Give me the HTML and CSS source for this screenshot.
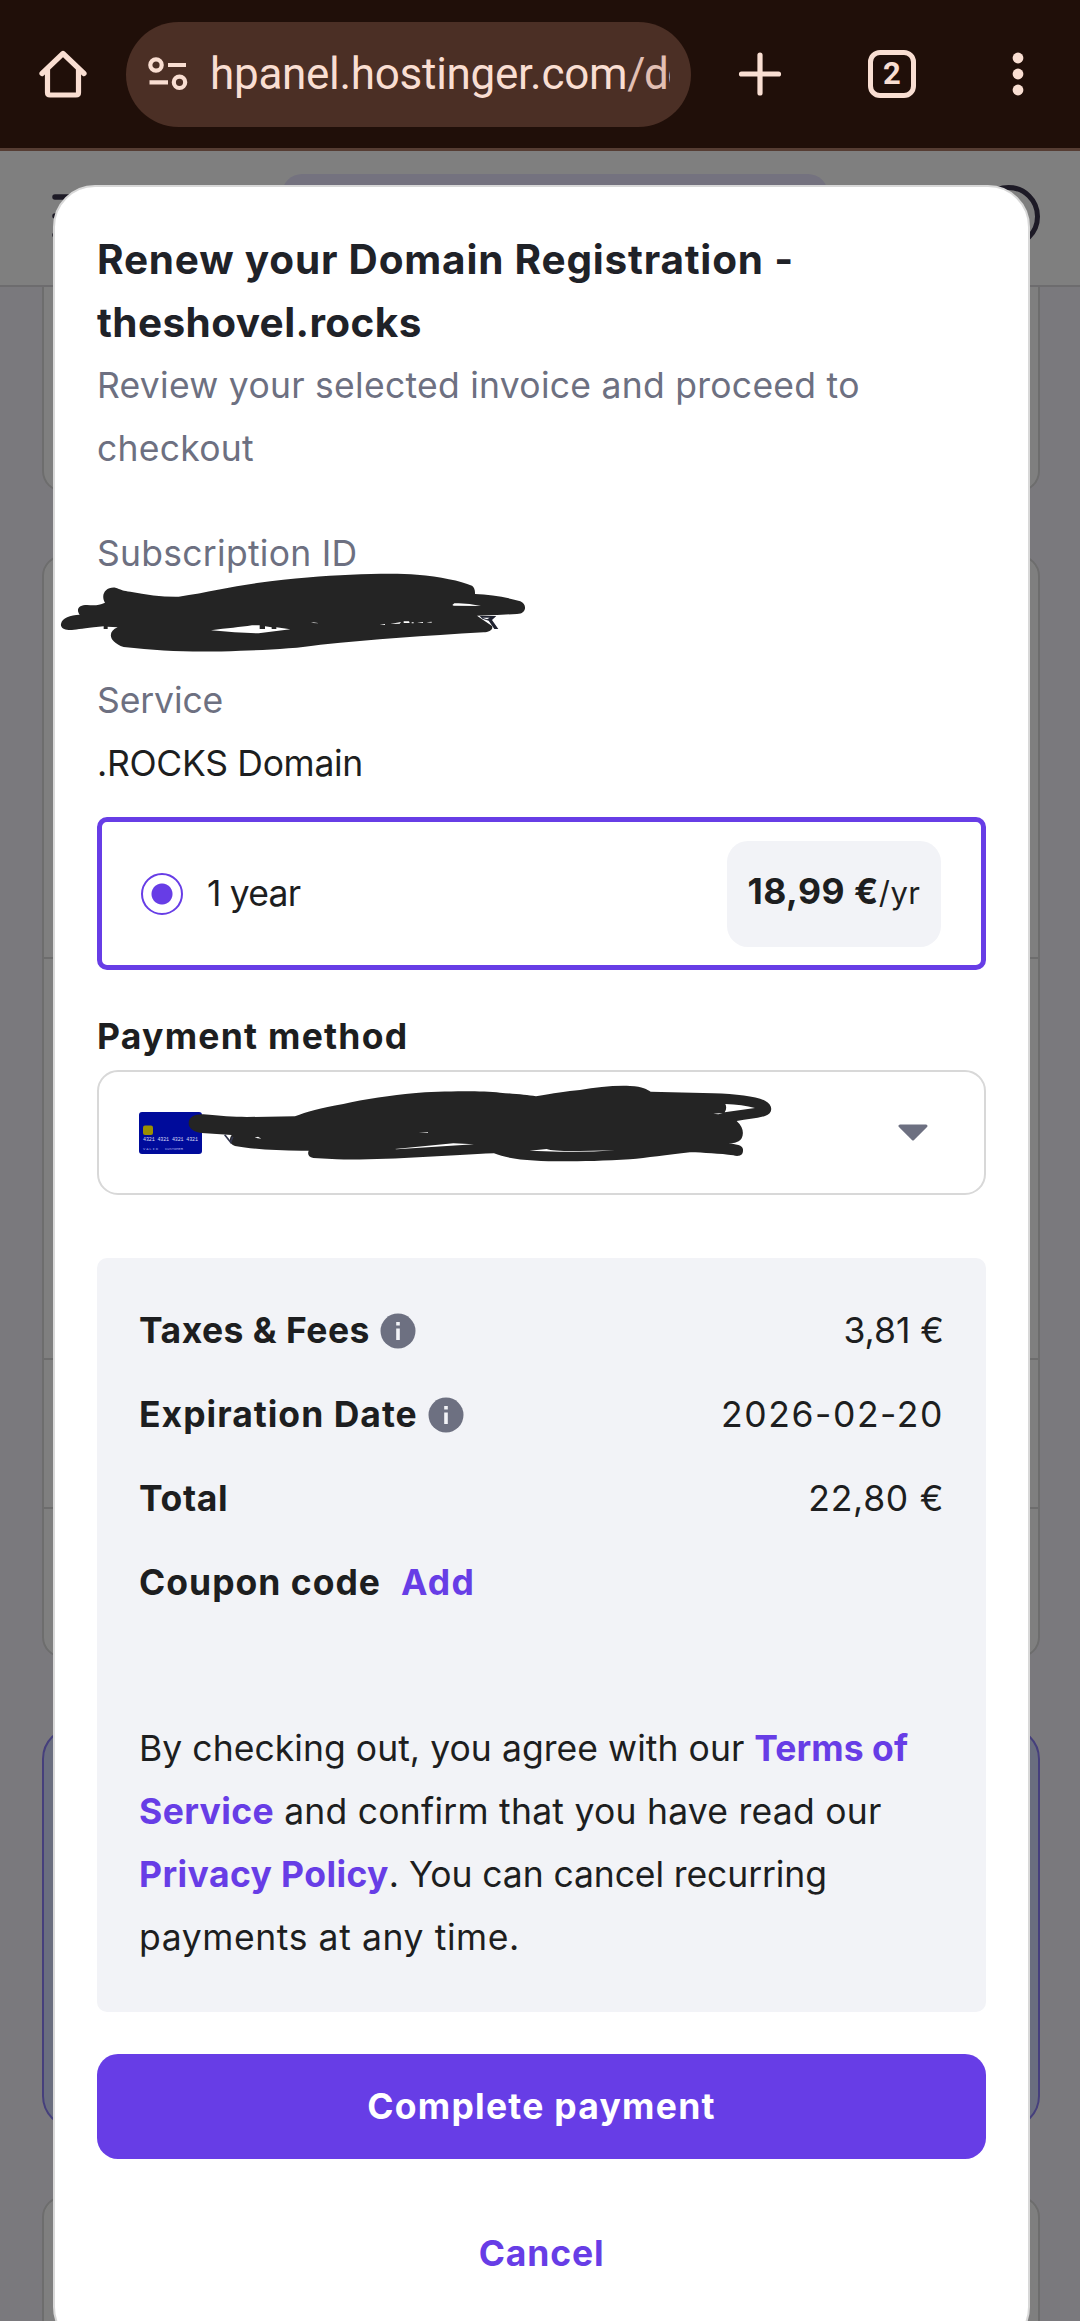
FILE: index.html
```html
<!DOCTYPE html>
<html lang="en">
<head>
<meta charset="utf-8">
<title>Renew your Domain Registration</title>
<link rel="stylesheet" href="styles.css">
</head>
<body>
<header class="browser">
  <svg class="home" width="48" height="48" viewBox="0 0 48 48"><path d="M3 23.500L24 3.500 45 23.500M8.500 19V42.500Q8.500 45 11 45H37Q39.500 45 39.500 42.500V19" fill="none" stroke="currentColor" stroke-width="5.200" stroke-linecap="round" stroke-linejoin="round"/></svg>
  <div class="address">
    <svg class="tune" width="40" height="34" viewBox="0 0 40 34" fill="none" stroke="currentColor" stroke-width="4.200"><circle cx="8" cy="8" r="5.700"/><path d="M20 8H38M1.500 25.300H20"/><circle cx="31.500" cy="25.300" r="5.700"/></svg>
    <div class="url">hpanel.hostinger.com<span class="url-path">/do</span></div>
  </div>
  <svg class="plus" width="44" height="44" viewBox="0 0 44 44"><path d="M22 3V41M3.500 22H40.500" stroke="currentColor" stroke-width="5.200" stroke-linecap="round"/></svg>
  <div class="tabs">2</div>
  <svg class="more" width="12" height="44" viewBox="0 0 12 44" fill="currentColor"><circle cx="6" cy="6" r="5.400"/><circle cx="6" cy="22" r="5.400"/><circle cx="6" cy="38" r="5.400"/></svg>
</header>
<main class="app">
  <div class="topbar">
    <svg class="menu" width="50" height="44" viewBox="0 0 50 44" stroke="currentColor" stroke-width="5.500" stroke-linecap="round"><path d="M3 3H47M3 22H47M3 41H47"/></svg>
    <div class="search"></div>
    <div class="avatar"></div>
  </div>
  <div class="panels">
    <section class="panel panel-first"></section>
    <section class="panel panel-list"><div class="cell cell-a"></div><div class="cell cell-b"></div><div class="cell cell-c"></div></section>
    <section class="panel panel-promo"></section>
    <section class="panel panel-last"></section>
  </div>
</main>
<div class="overlay">
  <div class="modal">
    <h1>Renew your Domain Registration -<br><span class="domain">theshovel.rocks</span></h1>
    <p class="muted">Review your selected invoice and proceed to<br>checkout</p>
    <div class="field id-field"><span class="muted">Subscription ID</span></div>
    <div class="field service"><span class="muted service-label">Service</span><br><span class="service-name">.ROCKS Domain</span></div>
    <div class="option">
      <span class="radio"></span>
      <span class="period">1 year</span>
      <div class="price"><b>18,99 €</b><small>/yr</small></div>
    </div>
    <h2>Payment method</h2>
    <div class="select">
      <svg class="card" width="63" height="42" viewBox="0 0 63 42"><rect width="63" height="42" rx="3" fill="#000b9b"/><rect x="4" y="13.500" width="10" height="9.500" rx="2" fill="#9c9000"/><text x="4" y="29" font-size="5" textLength="55" fill="#d9dbf5">4321 4321 4321 4321</text><text x="4" y="38" font-size="3.800" textLength="15" fill="#a9aeea">VALID</text><text x="26" y="38" font-size="3.800" textLength="18" fill="#a9aeea">CUSTOMER</text></svg>
      <svg class="caret" width="30" height="18" viewBox="0 0 30 18"><path d="M2 2H28L15 15Z" fill="#6d7081" stroke="#6d7081" stroke-width="3" stroke-linejoin="round"/></svg>
    </div>
    <div class="summary">
      <div class="row taxes"><b>Taxes &amp; Fees</b><svg class="info" width="36" height="36" viewBox="0 0 36 36"><circle cx="18" cy="18" r="17.500" fill="#6d7081"/><path d="M18 9V12.500M18 15.500V27" stroke="#f2f3f7" stroke-width="3.600"/></svg><span class="value">3,81 €</span></div>
      <div class="row expiry"><b>Expiration Date</b><svg class="info" width="36" height="36" viewBox="0 0 36 36"><circle cx="18" cy="18" r="17.500" fill="#6d7081"/><path d="M18 9V12.500M18 15.500V27" stroke="#f2f3f7" stroke-width="3.600"/></svg><span class="value">2026-02-20</span></div>
      <div class="row total"><b>Total</b><span class="value">22,80 €</span></div>
      <div class="row coupon"><b>Coupon code</b><a>Add</a></div>
      <p class="terms"><span class="t1">By checking out, you agree with our</span> <a class="t1">Terms of</a><br><a>Service</a> <span class="t2">and confirm that you have read our</span><br><a>Privacy Policy</a>. <span class="t3">You can cancel recurring</span><br><span class="t4">payments at any time.</span></p>
    </div>
    <button class="primary">Complete payment</button>
    <button class="cancel">Cancel</button>
  </div>
</div>
<svg class="ink ink-id" width="475" height="90" viewBox="50 90 1425 270" fill="#242424">
  <path d="M62 252C65 232 90 226 118 224C105 205 118 195 140 195C165 197 175 196 194 188C180 165 195 140 225 143C240 148 250 153 270 155C320 165 370 171 415 170C500 157 570 140 650 129C760 114 850 107 930 104C1010 101 1080 100 1130 104C1200 110 1260 122 1295 137Q1305 145 1304 162C1350 163 1400 172 1440 184C1462 194 1458 222 1430 222L1370 225 1310 227 1355 258C1360 270 1345 276 1330 277C1150 288 1000 298 840 314C770 325 680 330 600 332C470 338 370 334 250 321C205 305 200 275 232 262L202 260V267H190V259L160 262C120 266 100 271 85 270C70 270 60 262 62 252Z"/>
  <path d="M512 271C560 264 600 262 635 256H658V267H674V259L694 262V267H708V262L750 268 655 280Q590 279 512 271ZM1236 195L1242 190Q1280 188 1322 198L1240 197ZM1018 254L1034 252V255ZM1050 252L1082 246 1078 251ZM1090 244H1106L1108 249H1090ZM1114 247H1120V250H1114ZM1130 247L1148 246V249ZM1158 247L1174 245V248ZM812 246L838 250 820 249Z" fill="#fff"/>
  <path d="M1318 228H1368L1355 240 1374 267H1362L1345 242 1326 236Z" fill="#1f2230"/>
  <path d="M1326 233H1348L1340 238Z" fill="#fff"/>
</svg>
<svg class="ink ink-card" width="590" height="90" viewBox="315 840 1770 270" fill="#242424">
  <path d="M326 970C326 950 345 942 370 943C420 948 460 951 500 951L645 949C680 935 720 925 790 912C850 898 940 885 1000 880C1080 873 1200 872 1260 878C1310 882 1340 885 1368 889C1420 880 1460 873 1500 870C1550 862 1600 856 1650 858C1690 860 1700 868 1712 875L1900 880C1970 882 2030 890 2055 902C2080 915 2080 940 2055 948C2030 955 2000 958 1970 963C1990 980 1992 1000 1985 1015C1975 1030 1955 1030 1945 1030C1985 1035 1990 1040 1989 1053C1988 1070 1970 1069 1960 1066C1920 1061 1870 1058 1830 1057C1760 1064 1700 1074 1650 1078C1580 1083 1500 1084 1450 1084C1370 1083 1290 1080 1242 1060C1100 1066 900 1082 770 1078L700 1074C685 1070 682 1062 686 1052C600 1053 520 1048 465 1038C450 1034 445 1020 455 1005L365 999C340 996 326 985 326 970Z"/>
  <path d="M1936 912C1970 913 2000 918 2025 924L1934 937Q1942 925 1936 912ZM1348 1052L1400 1047Q1420 1054 1500 1053L1605 1051Q1520 1057 1440 1055ZM945 1047L1120 1030 1182 1033 950 1048ZM524 1013L544 1016 534 1010ZM1900 941L1928 939 1915 943ZM1016 997L1044 996V998Z" fill="#fff"/>
  <path d="M434 1004L452 1027 458 1010" fill="none" stroke="#34374d" stroke-width="5"/>
</svg>
</body>
</html>
```
FILE: styles.css
```css
* { box-sizing: border-box; }
body {
  position: relative;
  height: 2321px;
  margin: 0;
  overflow: hidden;
  background: #f5f2fb;
  color: #1d1e20;
  font: 400 35.5px/63px Inter, "Liberation Sans", sans-serif;
}
h1, h2, p { margin: 0; }
svg { display: block; flex: none; }
b, a { font-weight: 700; }

/* Browser toolbar */
.browser {
  position: relative;
  z-index: 2;
  display: flex;
  align-items: center;
  height: 151px;
  padding: 0 56px 0 39px;
  background: #200f09;
  border-bottom: 3px solid #563d33;
  color: #f9ded2;
}
.address {
  display: flex;
  align-items: center;
  width: 565px;
  height: 105px;
  margin-left: 39px;
  padding: 0 21px 0 22px;
  border-radius: 53px;
  background: #4b2f25;
}
.url {
  width: 460px;
  margin-left: 22px;
  overflow: hidden;
  font: 400 44px/60px Roboto, sans-serif;
  letter-spacing: -.28px;
  white-space: nowrap;
}
.url-path { color: #e2bfb3; letter-spacing: -1.5px; }
.plus { margin-left: 47px; }
.tabs {
  width: 48px;
  height: 48px;
  margin-left: 86px;
  border: 5.5px solid currentColor;
  border-radius: 12px;
  font: 700 31px/37px Roboto, sans-serif;
  text-align: center;
}
.more { margin-left: 96px; }

/* Account page behind the dialog */
.topbar {
  display: flex;
  height: 136px;
  padding: 0 40px 0 52px;
  border-bottom: 2px solid #dad9dc;
  background: #fff;
  color: #3a344c;
}
.menu { margin-top: 43px; }
.search {
  width: 546px;
  height: 88px;
  margin: 23px 0 0 180px;
  border-radius: 20px;
  background: #e8e4fe;
}
.avatar {
  width: 63px;
  height: 63px;
  margin: 34px 0 0 auto;
  border: 5.5px solid currentColor;
  border-radius: 50%;
}
.panels { display: flex; flex-direction: column; padding: 0 40px 0 42px; }
.panel { flex: none; border: 2px solid #dadada; border-radius: 21px; background: #fff; }
.panel-first { height: 205px; border-top: 0; border-radius: 0 0 21px 21px; }
.panel-list { height: 1103px; margin-top: 63px; }
.cell { border-bottom: 2px solid #dadada; }
.cell-a { height: 402px; }
.cell-b { height: 401px; }
.cell-c { height: 149px; }
.panel-promo { height: 401px; margin-top: 69px; border-color: #8a7ef8; border-radius: 32px; background: #d5dcff; }
.panel-last { height: 200px; margin-top: 68px; }

/* Renewal dialog */
.overlay {
  position: absolute;
  inset: 151px 0 0;
  padding: 34px 50px 0 53px;
  background: rgba(0, 0, 0, .5);
}
.modal {
  height: 2164px;
  padding: 41px 42px;
  border: 2px solid #d8d8d8;
  border-radius: 42px;
  background: #fff;
  white-space: nowrap;
}
h1 { color: #1f2228; font-size: 40.5px; font-weight: 700; line-height: 63px; letter-spacing: .8px; }
.domain { letter-spacing: .4px; }
.muted { color: #6d7081; letter-spacing: .27px; }
.id-field { height: 126px; margin-top: 42px; }
.service { margin-top: 21px; }
.service-label { letter-spacing: -.1px; }
.service-name { letter-spacing: -.3px; }
.option {
  display: flex;
  align-items: center;
  height: 153px;
  margin-top: 22px;
  padding: 0 40px 0 39px;
  border: 5px solid #673de6;
  border-radius: 10px;
}
.radio {
  width: 42px;
  height: 42px;
  border: 2px solid #673de6;
  border-radius: 50%;
  background: radial-gradient(circle, #673de6 10px, transparent 11px);
}
.period { margin-left: 24px; letter-spacing: -.8px; }
.price {
  width: 214px;
  height: 106px;
  margin-left: auto;
  border-radius: 21px;
  background: #f2f3f7;
  line-height: 102px;
  text-align: center;
}
.price b { letter-spacing: .48px; }
.price small { font-size: 31px; letter-spacing: .5px; }
h2 { margin-top: 35px; font-size: 35.5px; font-weight: 700; line-height: 63px; letter-spacing: 1.25px; }
.select {
  display: flex;
  align-items: center;
  justify-content: space-between;
  height: 125px;
  margin-top: 2px;
  padding: 0 56px 0 40px;
  border: 2px solid #d8d8d8;
  border-radius: 21px;
}
.card { font-family: "Liberation Mono", monospace; }
.summary {
  height: 754px;
  margin-top: 63px;
  padding: 41px 42px 0;
  border-radius: 10px;
  background: #f2f3f7;
}
.row { display: flex; align-items: center; height: 63px; margin-bottom: 21px; }
.info { margin-left: 10px; }
.value { margin-left: auto; }
.taxes b { letter-spacing: .47px; }
.expiry b { letter-spacing: 1px; }
.expiry .value { letter-spacing: 1.57px; }
.total b { letter-spacing: .6px; }
.total .value { letter-spacing: .7px; }
.coupon { letter-spacing: 1px; }
a { color: #673de6; letter-spacing: .4px; }
.coupon a { margin-left: 20px; letter-spacing: 1.2px; }
.terms { margin-top: 103px; }
.t1 { letter-spacing: .05px; }
.t2 { letter-spacing: .25px; }
.t3 { letter-spacing: -.1px; }
.t4 { letter-spacing: .6px; }
button {
  display: block;
  width: 100%;
  height: 105px;
  padding: 0;
  border: 0;
  border-radius: 21px;
  font: 700 35.5px/103px Inter, "Liberation Sans", sans-serif;
}
.primary { margin-top: 42px; background: #673de6; color: #fff; letter-spacing: 1.25px; }
.cancel { margin-top: 42px; background: none; color: #673de6; letter-spacing: .85px; }

/* Marker strokes drawn over the private values */
.ink { position: absolute; }
.ink-id { left: 57px; top: 570px; }
.ink-card { left: 185px; top: 1080px; }
```
